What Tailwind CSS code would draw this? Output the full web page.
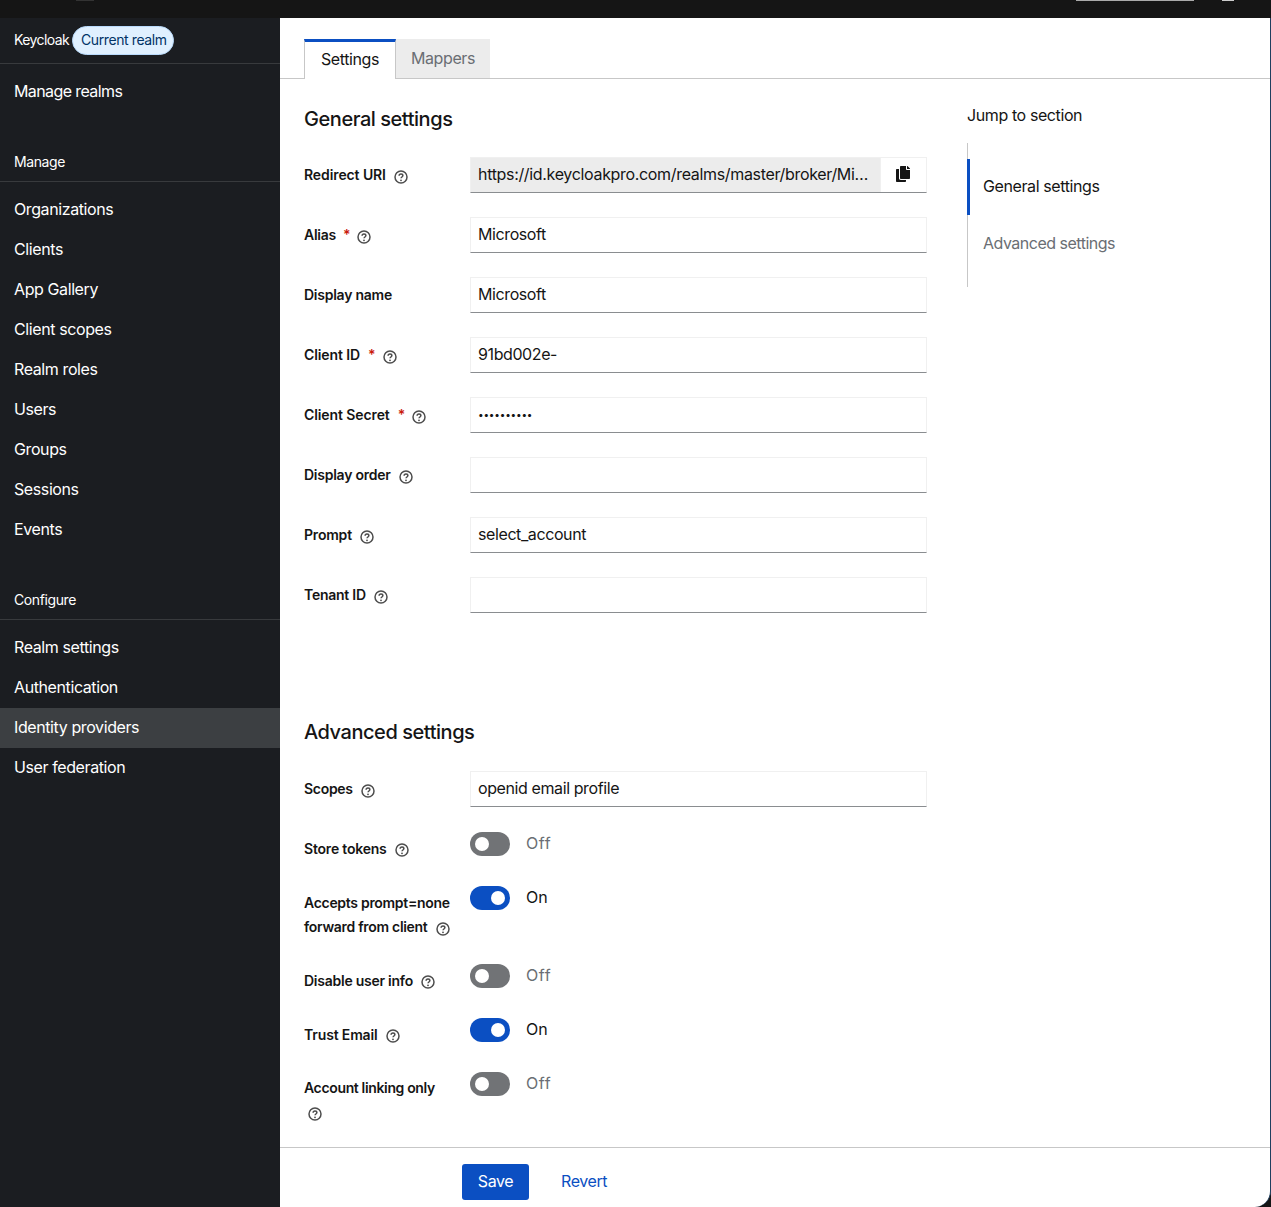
<!DOCTYPE html>
<html lang="en">

<head>
  <meta charset="UTF-8" />
  <title>Keycloak - Identity providers</title>
  <script src="https://cdn.jsdelivr.net/npm/@tailwindcss/browser@4"></script>
</head>

<body class="bg-[#151515] h-[1207px] overflow-hidden font-['Inter',sans-serif] text-base tracking-[-0.4px] text-[#151515] flex flex-col">
  <svg class="hidden">
    <symbol id="help" viewBox="0 0 14 14">
      <circle cx="7" cy="7" r="6" fill="none" stroke="#4d4d4d" stroke-width="1.5" />
      <path d="M5.1 5.7c0-1.1.9-1.8 1.9-1.8s1.9.7 1.9 1.7c0 1.4-1.9 1.4-1.9 2.7" fill="none" stroke="#4d4d4d" stroke-width="1.5" />
      <circle cx="7" cy="10.3" r=".9" fill="#4d4d4d" />
    </symbol>
  </svg>

  <!-- top bar, cut off by the screenshot -->
  <header class="relative h-[18px] shrink-0 bg-[#151515]">
    <span class="absolute left-[76px] top-0 h-px w-[18px] bg-[#333]"></span>
    <span class="absolute left-[1076px] top-0 h-px w-[118px] bg-[#aaa]"></span>
    <span class="absolute left-[1222px] top-0 h-px w-[12px] bg-[#ccc]"></span>
  </header>

  <div class="flex flex-1 min-h-0">
    <!-- sidebar -->
    <aside class="w-[280px] shrink-0 bg-[#1b1d21] text-white">
      <div class="h-[46px] flex items-center pl-[14px] pb-px border-b border-[#383a3d] text-sm">
        <span class="tracking-[-0.6px]">Keycloak</span>
        <span class="ml-[3px] w-[102px] h-[29px] flex items-center pl-2 rounded-full bg-[#e0f0ff] border border-[#b9dafc] text-[#003366]">Current realm</span>
      </div>
      <a class="h-[54px] flex items-center pl-[14px] tracking-[-0.6px]">Manage realms</a>
      <div class="mt-[24px] h-10 flex items-center pl-[14px] border-b border-[#383a3d] text-sm">Manage</div>
      <nav class="pt-[7px]">
        <a class="h-10 flex items-center pl-[14px]">Organizations</a>
        <a class="h-10 flex items-center pl-[14px]">Clients</a>
        <a class="h-10 flex items-center pl-[14px]">App Gallery</a>
        <a class="h-10 flex items-center pl-[14px]">Client scopes</a>
        <a class="h-10 flex items-center pl-[14px]">Realm roles</a>
        <a class="h-10 flex items-center pl-[14px]">Users</a>
        <a class="h-10 flex items-center pl-[14px]">Groups</a>
        <a class="h-10 flex items-center pl-[14px]">Sessions</a>
        <a class="h-10 flex items-center pl-[14px]">Events</a>
      </nav>
      <div class="mt-[31px] h-10 flex items-center pl-[14px] border-b border-[#383a3d] text-sm">Configure</div>
      <nav class="pt-[8px]">
        <a class="h-10 flex items-center pl-[14px] pb-[2px]">Realm settings</a>
        <a class="h-10 flex items-center pl-[14px] pb-[2px]">Authentication</a>
        <a class="h-10 flex items-center pl-[14px] pb-[2px] bg-[#3c3f42]">Identity providers</a>
        <a class="h-10 flex items-center pl-[14px] pb-[2px]">User federation</a>
      </nav>
    </aside>

    <!-- main -->
    <main class="flex-1 flex flex-col min-w-0 bg-white rounded-br-[16px] border-r border-[#1f3f5f]">
      <div class="pt-[21px] pl-6 flex h-[61px] border-b border-[#c7c7c7]">
        <button class="w-[92px] h-10 pb-[4px] border-t-[3px] border-[#0b4fc2] border-x border-x-[#c7c7c7] bg-white">Settings</button>
        <button class="w-[94px] h-[39px] pb-[2px] bg-[#ececec] text-[#6a6e73]">Mappers</button>
      </div>

      <div class="flex-1 flex pl-6 min-h-0">
        <div class="w-[623px]">
          <h2 class="mt-[26px] h-7 flex items-center text-xl font-medium tracking-[-0.45px]">General settings</h2>
          <div class="mt-[24px] grid grid-cols-[166px_457px] gap-y-6 text-sm">
            <label class="h-9 pt-2 font-semibold tracking-[-0.1px] flex items-start">Redirect URI<svg class="ml-2 mt-[5px] w-[14px] h-[14px]"><use href="#help" /></svg></label>
            <div class="h-9 flex border border-[#f0f0f0] border-b-[#8a8d90] text-base">
              <div class="w-[409px] bg-[#ececec] px-[7px] leading-[33px] tracking-[-0.33px] truncate">https://id.keycloakpro.com/realms/master/broker/Microsoft/endpoint</div>
              <button class="flex-1 flex items-center justify-center bg-white border-l border-[#f0f0f0]">
                <svg class="w-[14px] h-4 mb-[3px] mr-[2px]" viewBox="0 0 448 512" fill="#151515"><path d="M320 448v40c0 13.255-10.745 24-24 24H24c-13.255 0-24-10.745-24-24V120c0-13.255 10.745-24 24-24h72v296c0 30.879 25.121 56 56 56h168zm0-344V0H152c-13.255 0-24 10.745-24 24v368c0 13.255 10.745 24 24 24h272c13.255 0 24-10.745 24-24V128H344c-13.2 0-24-10.8-24-24zm120.971-31.029L375.029 7.029A24 24 0 0 0 358.059 0H352v96h96v-6.059a24 24 0 0 0-7.029-16.97z" /></svg>
              </button>
            </div>

            <label class="h-9 pt-2 font-semibold tracking-[-0.25px] flex items-start">Alias<span class="ml-[7px] text-[#c9190b]">*</span><svg class="ml-[7px] mt-[5px] w-[14px] h-[14px]"><use href="#help" /></svg></label>
            <div class="h-9 px-[7px] leading-[33px] text-base border border-[#f0f0f0] border-b-[#8a8d90]">Microsoft</div>

            <label class="h-9 pt-2 font-semibold tracking-[-0.25px] flex items-start">Display name</label>
            <div class="h-9 px-[7px] leading-[33px] text-base border border-[#f0f0f0] border-b-[#8a8d90]">Microsoft</div>

            <label class="h-9 pt-2 font-semibold tracking-[-0.1px] flex items-start">Client ID<span class="ml-2 text-[#c9190b]">*</span><svg class="ml-[7px] mt-[5px] w-[14px] h-[14px]"><use href="#help" /></svg></label>
            <div class="h-9 px-[7px] leading-[33px] text-base border border-[#f0f0f0] border-b-[#8a8d90]">91bd002e-</div>

            <label class="h-9 pt-2 font-semibold tracking-[-0.1px] flex items-start">Client Secret<span class="ml-2 text-[#c9190b]">*</span><svg class="ml-[7px] mt-[5px] w-[14px] h-[14px]"><use href="#help" /></svg></label>
            <div class="h-9 px-[7px] leading-[32px] text-[10px] tracking-[-0.2px] border border-[#f0f0f0] border-b-[#8a8d90]">••••••••••</div>

            <label class="h-9 pt-2 font-semibold tracking-[-0.25px] flex items-start">Display order<svg class="ml-2 mt-[5px] w-[14px] h-[14px]"><use href="#help" /></svg></label>
            <div class="h-9 px-[7px] border border-[#f0f0f0] border-b-[#8a8d90]"></div>

            <label class="h-9 pt-2 font-semibold tracking-[-0.2px] flex items-start">Prompt<svg class="ml-2 mt-[5px] w-[14px] h-[14px]"><use href="#help" /></svg></label>
            <div class="h-9 px-[7px] leading-[33px] text-base border border-[#f0f0f0] border-b-[#8a8d90]">select_account</div>

            <label class="h-9 pt-2 font-semibold tracking-[-0.25px] flex items-start">Tenant ID<svg class="ml-2 mt-[5px] w-[14px] h-[14px]"><use href="#help" /></svg></label>
            <div class="h-9 px-[7px] border border-[#f0f0f0] border-b-[#8a8d90]"></div>
          </div>

          <h2 class="mt-[105px] h-7 flex items-center text-xl font-medium tracking-[-0.45px]">Advanced settings</h2>
          <div class="mt-[25px] grid grid-cols-[166px_457px] gap-y-6 text-sm">
            <label class="h-9 pt-2 font-semibold tracking-[-0.3px] flex items-start">Scopes<svg class="ml-2 mt-[5px] w-[14px] h-[14px]"><use href="#help" /></svg></label>
            <div class="h-9 mb-px px-[7px] leading-[33px] text-base border border-[#f0f0f0] border-b-[#8a8d90]">openid email profile</div>

            <label class="pt-[5px] pb-px leading-6 font-semibold tracking-[-0.2px] flex items-start">Store tokens<svg class="ml-2 mt-[6px] w-[14px] h-[14px]"><use href="#help" /></svg></label>
            <div class="flex items-start gap-4 text-base text-[#6a6e73] leading-[22px] tracking-[0.6px]">
              <span class="w-10 h-6 rounded-full bg-[#717376] flex items-center pl-[5px]"><span class="w-[14px] h-[14px] rounded-full bg-white"></span></span>Off
            </div>

            <label class="pt-[5px] pb-px leading-6 font-semibold tracking-[-0.3px]">Accepts prompt=none<br />forward from client<svg class="inline ml-2 translate-y-px w-[14px] h-[14px]"><use href="#help" /></svg></label>
            <div class="flex items-start gap-4 text-base leading-[22px] tracking-normal">
              <span class="w-10 h-6 rounded-full bg-[#0b4fc2] flex items-center justify-end pr-[5px]"><span class="w-[14px] h-[14px] rounded-full bg-white"></span></span>On
            </div>

            <label class="pt-[5px] pb-px leading-6 font-semibold tracking-[-0.25px] flex items-start">Disable user info<svg class="ml-2 mt-[6px] w-[14px] h-[14px]"><use href="#help" /></svg></label>
            <div class="flex items-start gap-4 text-base text-[#6a6e73] leading-[22px] tracking-[0.6px]">
              <span class="w-10 h-6 rounded-full bg-[#717376] flex items-center pl-[5px]"><span class="w-[14px] h-[14px] rounded-full bg-white"></span></span>Off
            </div>

            <label class="pt-[5px] pb-px leading-6 font-semibold tracking-[-0.15px] flex items-start">Trust Email<svg class="ml-2 mt-[6px] w-[14px] h-[14px]"><use href="#help" /></svg></label>
            <div class="flex items-start gap-4 text-base leading-[22px] tracking-normal">
              <span class="w-10 h-6 rounded-full bg-[#0b4fc2] flex items-center justify-end pr-[5px]"><span class="w-[14px] h-[14px] rounded-full bg-white"></span></span>On
            </div>

            <label class="pt-[4px] leading-6 font-semibold tracking-[-0.35px]">Account linking only<br /><svg class="inline ml-1 translate-y-px w-[14px] h-[14px]"><use href="#help" /></svg></label>
            <div class="flex items-start gap-4 text-base text-[#6a6e73] leading-[22px] tracking-[0.6px]">
              <span class="w-10 h-6 rounded-full bg-[#717376] flex items-center pl-[5px]"><span class="w-[14px] h-[14px] rounded-full bg-white"></span></span>Off
            </div>
          </div>
        </div>

        <!-- jump links -->
        <div class="ml-10 w-[200px]">
          <p class="mt-[24px] h-6 leading-6">Jump to section</p>
          <ul class="mt-[16px] pt-4 h-[144px] border-l border-[#c7c7c7]">
            <li class="h-14 -ml-px pl-[13px] pb-[2px] flex items-center border-l-[3px] border-[#0b4fc2]">General settings</li>
            <li class="h-14 pl-[15px] flex items-center tracking-[-0.5px] text-[#6a6e73]">Advanced settings</li>
          </ul>
        </div>
      </div>

      <footer class="h-[60px] shrink-0 border-t border-[#c7c7c7] pl-[182px] pt-4 flex items-start gap-8">
        <button class="w-[67px] h-9 pb-[2px] rounded-[3px] bg-[#0b4fc2] text-white">Save</button>
        <a class="h-9 leading-[34px] text-[#0b4fc2]">Revert</a>
      </footer>
    </main>
  </div>
</body>

</html>
